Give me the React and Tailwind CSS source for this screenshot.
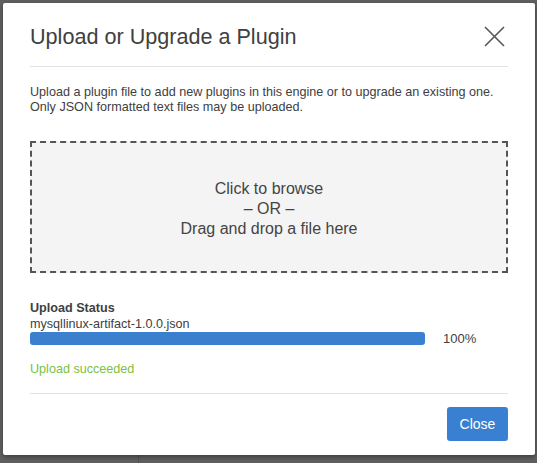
export default function App() {
  return (
    <div className="w-[537px] h-[463px] bg-[#5f5f5f] overflow-hidden relative" style={{ fontFamily: '"Liberation Sans", Arial, sans-serif' }}>
      <div className="absolute left-[138px] top-[455px] w-px h-[8px] bg-[#505050]" />
      <div className="absolute left-[3px] top-[3px] w-[532px] h-[452px] bg-white rounded-[2px] shadow-[0_2px_4px_rgba(0,0,0,0.35)] flex flex-col px-[27px]">
        <div className="flex items-center justify-between pt-[19px] pb-[15px] border-b border-[#e3e3e3]">
          <h1 className="text-[21.6px] leading-[29px] text-[#404040]">Upload or Upgrade a Plugin</h1>
          <svg width="21" height="21" viewBox="0 0 21 21" className="mr-[3px]">
            <path d="M1 1 L20 20 M20 1 L1 20" stroke="#555" strokeWidth="1.6" fill="none" />
          </svg>
        </div>
        <p className="mt-[18px] text-[12.6px] leading-[14.5px] text-[#404040] whitespace-nowrap">
          Upload a plugin file to add new plugins in this engine or to upgrade an existing one.
          <br />
          Only JSON formatted text files may be uploaded.
        </p>
        <div className="mt-[27px] h-[132px] pt-[3px] border-2 border-dashed border-[#555] bg-[#f4f4f4] flex flex-col items-center justify-center text-[16px] leading-[20px] text-[#444]">
          <div>Click to browse</div>
          <div>– OR –</div>
          <div>Drag and drop a file here</div>
        </div>
        <div className="mt-[27px] text-[12.6px] leading-[16px] text-[#404040]">
          <div className="font-bold">Upload Status</div>
          <div>mysqllinux-artifact-1.0.0.json</div>
          <div className="flex items-center h-[13px]">
            <div className="w-[395px] h-[13px] rounded-[3px] bg-[#3a80cf]" />
            <div className="ml-[18px] text-[13px]">100%</div>
          </div>
          <div className="mt-[16px] text-[#7bc143]">Upload succeeded</div>
        </div>
        <div className="mt-[16px] border-t border-[#e3e3e3]" />
        <div className="flex justify-end mt-[13px]">
          <button className="w-[61px] h-[34px] rounded-[3px] bg-[#3a80d2] text-white text-[14px]">Close</button>
        </div>
      </div>
    </div>
  );
}
